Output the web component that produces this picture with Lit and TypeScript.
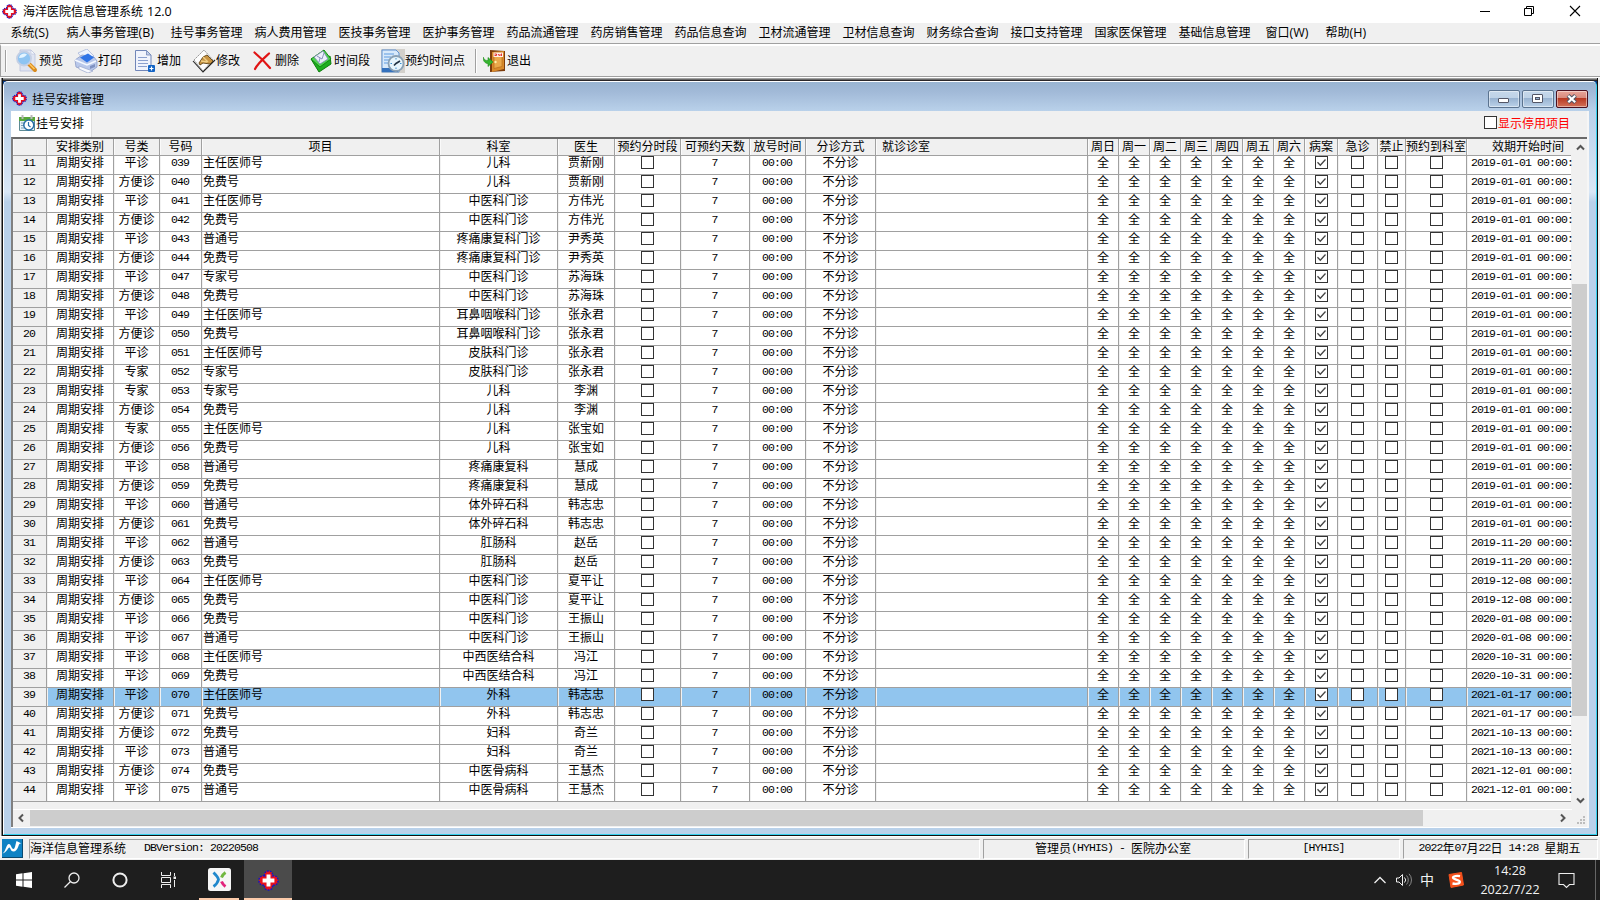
import { LitElement, html, css, svg } from "lit";
import { customElement } from "lit/decorators.js";
import { classMap } from "lit/directives/class-map.js";

const MENUS: [string, string][] = [
  ["系统", "(S)"], ["病人事务管理", "(B)"], ["挂号事务管理", ""], ["病人费用管理", ""], ["医技事务管理", ""],
  ["医护事务管理", ""], ["药品流通管理", ""], ["药房销售管理", ""], ["药品信息查询", ""], ["卫材流通管理", ""],
  ["卫材信息查询", ""], ["财务综合查询", ""], ["接口支持管理", ""], ["国家医保管理", ""], ["基础信息管理", ""],
  ["窗口", "(W)"], ["帮助", "(H)"],
];

const HEADERS = ["", "安排类别", "号类", "号码", "项目", "科室", "医生", "预约分时段", "可预约天数", "放号时间", "分诊方式",
  "就诊诊室", "周日", "周一", "周二", "周三", "周四", "周五", "周六", "病案", "急诊", "禁止", "预约到科室", "效期开始时间"];

const P = "平诊", F = "方便诊", Z = "专家";
const ZR = "主任医师号", MF = "免费号", PT = "普通号", ZJ = "专家号";
// [号类, 号码, 项目, 科室, 医生, 开始日期]
const ROWS: string[][] = [
  [P, "039", ZR, "儿科", "贾新刚", "2019-01-01"],
  [F, "040", MF, "儿科", "贾新刚", "2019-01-01"],
  [P, "041", ZR, "中医科门诊", "方伟光", "2019-01-01"],
  [F, "042", MF, "中医科门诊", "方伟光", "2019-01-01"],
  [P, "043", PT, "疼痛康复科门诊", "尹秀英", "2019-01-01"],
  [F, "044", MF, "疼痛康复科门诊", "尹秀英", "2019-01-01"],
  [P, "047", ZJ, "中医科门诊", "苏海珠", "2019-01-01"],
  [F, "048", MF, "中医科门诊", "苏海珠", "2019-01-01"],
  [P, "049", ZR, "耳鼻咽喉科门诊", "张永君", "2019-01-01"],
  [F, "050", MF, "耳鼻咽喉科门诊", "张永君", "2019-01-01"],
  [P, "051", ZR, "皮肤科门诊", "张永君", "2019-01-01"],
  [Z, "052", ZJ, "皮肤科门诊", "张永君", "2019-01-01"],
  [Z, "053", ZJ, "儿科", "李渊", "2019-01-01"],
  [F, "054", MF, "儿科", "李渊", "2019-01-01"],
  [Z, "055", ZR, "儿科", "张宝如", "2019-01-01"],
  [F, "056", MF, "儿科", "张宝如", "2019-01-01"],
  [P, "058", PT, "疼痛康复科", "慧成", "2019-01-01"],
  [F, "059", MF, "疼痛康复科", "慧成", "2019-01-01"],
  [P, "060", PT, "体外碎石科", "韩志忠", "2019-01-01"],
  [F, "061", MF, "体外碎石科", "韩志忠", "2019-01-01"],
  [P, "062", PT, "肛肠科", "赵岳", "2019-11-20"],
  [F, "063", MF, "肛肠科", "赵岳", "2019-11-20"],
  [P, "064", ZR, "中医科门诊", "夏平让", "2019-12-08"],
  [F, "065", MF, "中医科门诊", "夏平让", "2019-12-08"],
  [P, "066", MF, "中医科门诊", "王振山", "2020-01-08"],
  [P, "067", PT, "中医科门诊", "王振山", "2020-01-08"],
  [P, "068", ZR, "中西医结合科", "冯江", "2020-10-31"],
  [P, "069", MF, "中西医结合科", "冯江", "2020-10-31"],
  [P, "070", ZR, "外科", "韩志忠", "2021-01-17"],
  [F, "071", MF, "外科", "韩志忠", "2021-01-17"],
  [F, "072", MF, "妇科", "奇兰", "2021-10-13"],
  [P, "073", PT, "妇科", "奇兰", "2021-10-13"],
  [F, "074", MF, "中医骨病科", "王慧杰", "2021-12-01"],
  [P, "075", PT, "中医骨病科", "王慧杰", "2021-12-01"],
];

const cross = (size: number) => html`<svg width=${size} height=${size} viewBox="0 0 16 16">
  <path d="M5 4.500C4.600 1.800 6.300.7 8 .7s3.400 1.100 3 3.800C13.900 4.100 15.300 5.800 15.300 8s-1.400 3.900-4.300 3.500c.4 2.700-1.300 3.800-3 3.800s-3.400-1.100-3-3.800C2.100 11.900.7 10.200.7 8S2.100 4.100 5 4.500z" fill="#e8101c"/>
  <path d="M5 4.500C4.600 1.800 6.300.7 8 .7s3.400 1.100 3 3.800C13.900 4.100 15.300 5.800 15.300 8s-1.400 3.900-4.300 3.500c.4 2.700-1.300 3.800-3 3.800s-3.400-1.100-3-3.800C2.100 11.900.7 10.200.7 8S2.100 4.100 5 4.500z" fill="none" stroke="#1414c8" stroke-width="1.100" stroke-dasharray="1.300 .9"/>
  <path d="M6.500 3.500h3v3h3v3h-3v3h-3v-3h-3v-3h3z" fill="#fff"/></svg>`;

const TOOLS: { label: string; icon: unknown }[] = [
  { label: "预览", icon: svg`
    <path d="M5 1h11l4 4v17H5z" fill="#dfe4f2" stroke="#b9c0da" stroke-width=".8"/><path d="M16 1v4h4z" fill="#f7f9fd" stroke="#b9c0da" stroke-width=".6"/>
    <path d="M14 15l6 6" stroke="#d88a1c" stroke-width="4" stroke-linecap="round"/><path d="M14.500 15l5 5" stroke="#ffc860" stroke-width="1.500"/>
    <circle cx="9" cy="9.500" r="7" fill="#8ec4f2" stroke="#c4cfe4" stroke-width="1.800"/><path d="M4 9a5 5 0 0 1 8-3.500c-2 2.500-4 3.500-8 3.500z" fill="#e4f4ff"/>` },
  { label: "打印", icon: svg`
    <path d="M4 4l9-4 7 7-9 5z" fill="#eef3fd" stroke="#aab8da" stroke-width=".8"/><path d="M1 11L8 6l12 2 3 4v6l-7 5-14-5z" fill="#b9c8ea" stroke="#8c9cc8" stroke-width=".8"/>
    <path d="M6 8.500l8-4 6 4-7 5z" fill="#2f74e6"/><path d="M1 11l12 5 9-4" fill="none" stroke="#f4f8ff" stroke-width="1.600"/><path d="M5 17l8 3 6 2-5 2-9-4z" fill="#f8faff" stroke="#98a6cc" stroke-width=".7"/><path d="M16 17l5-2v3l-5 2z" fill="#7f92c2"/>` },
  { label: "增加", icon: svg`
    <path d="M2.500 1.500h11l4.500 4.500v15.500h-15.500z" fill="#f0f3fc" stroke="#7186b8"/><path d="M13.500 1.500v4.500h4.500z" fill="#c3cfe8" stroke="#7186b8" stroke-width=".8"/>
    <path d="M5 8.500h9M5 11.500h10M5 14.500h10M5 17.500h9" stroke="#8ba0ce"/><rect x="15" y="16" width="7" height="7" rx="1" fill="#1263c4"/><path d="M18.500 17.500v4M16.500 19.500h4" stroke="#fff" stroke-width="1.200"/>` },
  { label: "修改", icon: svg`
    <path d="M2 11L12 1l9 10-10 11z" fill="#fdfdfd" stroke="#9a9a9a" stroke-dasharray="2 .6"/><path d="M1 12l10 11 12-12" fill="none" stroke="#222" stroke-width="1.100"/>
    <path d="M7 14l4-6 4-2 6 6-3 3-7-1-3 2z" fill="#c89442" stroke="#5e4316" stroke-width=".9"/><path d="M11 8l5 5M9 12l6 1" stroke="#f0cf86" stroke-width="1.400"/>` },
  { label: "删除", icon: svg`
    <path d="M3.500 3.500C9 8 14 13 19 19M18 4.500C13 9 7 14 4 20" stroke="#e01414" stroke-width="2.200" fill="none" stroke-linecap="round"/>` },
  { label: "时间段", icon: svg`
    <path d="M1 10l8 13 12-8-1-8-11 7z" fill="#1fae1f" stroke="#0c7d0c"/><path d="M1 10L14 1l7 9-11 8z" fill="#4fd24f" stroke="#128a12"/>
    <path d="M4 8l9-6 5 8-8 5z" fill="#eceffa" stroke="#8088b4" stroke-width=".8"/><path d="M7 7l5 3 2-6M9 13l1-4" stroke="#8088b4" fill="none" stroke-width=".9"/>` },
  { label: "预约时间点", icon: svg`
    <rect x="0" y="0" width="24" height="24" fill="#d3d0cb"/><path d="M1 1h14l3 3v19H1z" fill="#d8e9fa" stroke="#5e92d2"/><path d="M3 5h10M3 8h7M3 11h5M3 14h4" stroke="#5e9be0"/><path d="M1 19h16v4H1z" fill="#3471bd"/>
    <circle cx="15" cy="14.500" r="7.500" fill="#e8f5fc" stroke="#8aa0b4" stroke-width="1.800"/><path d="M13 16.500l2-2 4-2.500" stroke="#234" stroke-width="1.600" fill="none"/><path d="M15 9v1.500M15 18.500V20M9.500 14.500h1.500M19 14.500h1.500" stroke="#3a8ed0"/>` },
  { label: "退出", icon: svg`
    <path d="M7 1l15 1v20l-15 1z" fill="#7c3c0c"/><path d="M9 3l12-1v18l-12 3z" fill="#d98a2b"/><path d="M11 6l8-.5v12L11 19.500z" fill="#eba94b" stroke="#b4681a" stroke-width=".6"/><rect x="10.500" y="3.500" width="9.500" height="4.500" fill="#fff0e8"/><path d="M11.500 5h2v1.500h-2M15 5l1.500 2M17 5v2M18.500 4.500v2.500" stroke="#e02020" stroke-width=".9" fill="none"/><circle cx="12.500" cy="13" r="1.200" fill="#fff1a8"/>
    <path d="M0 8c1 3 3 3.500 5 3.500V8.500l5 4.500-5 4.500v-3C2 14.500 0 12 0 8z" fill="#35b52f" stroke="#1d8a1a" stroke-width=".6"/>` },
];

@customElement("his-checkbox")
class HisCheckbox extends LitElement {
  static properties = { checked: { type: Boolean } };
  declare checked: boolean;
  static styles = css`
    :host { display: block; width: 13px; height: 13px; }
    svg { display: block; }
  `;
  render() {
    return html`<svg width="13" height="13"><rect x=".5" y=".5" width="12" height="12" fill="#fff" stroke="#333"/>
      ${this.checked ? svg`<path d="M2.500 6.300l2.800 2.900 5.200-5.700" fill="none" stroke="#444" stroke-width="1.300"/>` : ""}</svg>`;
  }
}

@customElement("his-grid")
class HisGrid extends LitElement {
  static styles = css`
    :host { display: block; width: 1559px; background: #f0f0f0; color: #000; }
    .row {
      display: grid; height: 19px; width: 1559px;
      grid-template-columns: 34px 67px 46px 42px 238px 118px 57px 66px 69px 56px 70px 212px repeat(7, 31px) 33px 40px 28px 61px 104px;
    }
    .head { height: 17px; background: #f0f0f0; }
    .cell {
      box-sizing: border-box; border-right: 1px solid #a0a0a0; border-bottom: 1px solid #a0a0a0;
      display: flex; justify-content: center; align-items: flex-start;
      background: #fff; white-space: nowrap; line-height: 11px; box-shadow: inset 1px 0 #f2f2f2; min-width: 0;
    }
    .head .cell { background: #f0f0f0; line-height: 13px; box-shadow: inset 1px 0 #fafafa; }
    .cell.num { background: #f0f0f0; }
    .selected .cell:not(.num) { background: #91c5ee; }
    .left { justify-content: flex-start; padding-left: 1px; }
    .head .room { justify-content: flex-start; padding-left: 6px; }
    .cell.date { justify-content: flex-start; padding-left: 4px; border-right: 0; }
    .head .cell.date { padding-left: 25px; }
    .cell.mono { font-family: "Liberation Mono", monospace; font-size: 11.500px; letter-spacing: -0.9px; padding-right: 1px; line-height: 14px; }
    .cell.date.mono { padding-right: 0; }
  `;
  render() {
    return html`
      <div class="row head">
        ${HEADERS.map((h, i) => html`<div class=${classMap({ cell: true, room: i === 11, date: i === 23 })}>${h}</div>`)}
      </div>
      ${ROWS.map(([kind, code, item, dept, doctor, date], i) => html`
        <div class=${classMap({ row: true, selected: i === 28 })}>
          <div class="cell num mono">${i + 11}</div>
          <div class="cell">周期安排</div>
          <div class="cell">${kind}</div>
          <div class="cell mono">${code}</div>
          <div class="cell left">${item}</div>
          <div class="cell">${dept}</div>
          <div class="cell">${doctor}</div>
          <div class="cell"><his-checkbox></his-checkbox></div>
          <div class="cell mono">7</div>
          <div class="cell mono">00:00</div>
          <div class="cell">不分诊</div>
          <div class="cell"></div>
          ${[0, 1, 2, 3, 4, 5, 6].map(() => html`<div class="cell">全</div>`)}
          <div class="cell"><his-checkbox checked></his-checkbox></div>
          <div class="cell"><his-checkbox></his-checkbox></div>
          <div class="cell"><his-checkbox></his-checkbox></div>
          <div class="cell"><his-checkbox></his-checkbox></div>
          <div class="cell date mono">${date} 00:00:</div>
        </div>`)}
    `;
  }
}

@customElement("app-root")
class AppRoot extends LitElement {
  static styles = css`
    :host {
      display: flex; flex-direction: column; width: 1600px; height: 900px; overflow: hidden;
      font: 12px "Noto Sans CJK SC", sans-serif; color: #000; background: #f0f0f0; white-space: nowrap;
    }
    * { box-sizing: border-box; }
    svg { display: block; flex: none; }
    .latin { font-family: "Open Sans", sans-serif; }
    .mono { font-family: "Liberation Mono", monospace; font-size: 11.500px; letter-spacing: -0.9px; white-space: pre; }

    .title { height: 23px; background: #fff; display: flex; align-items: center; padding: 0 19px 0 2px; }
    .title .name { margin: -1px 0 0 6px; flex: 1; }
    .title .name .latin { font-size: 12.500px; margin-left: 4px; }
    .sys { display: flex; gap: 33px; margin-top: -2px; }

    .menu { height: 21px; border-bottom: 1px solid #a0a0a0; padding-left: 10.500px; display: grid; line-height: 17px;
      grid-template-columns: 56px 104px repeat(12, 84px) 87px 60px 80px; }
    .menu .latin { font-size: 12.500px; }
    .tools { height: 33px; border-top: 2px solid #fff; border-left: 1px solid #a0a0a0; border-bottom: 1px solid #a0a0a0;
      display: flex; padding: 0 0 1px 4px; align-items: center; }
    .grip { width: 1px; height: 22px; background: #a0a0a0; margin-right: 9px; box-shadow: 1px 0 #fff; }
    .tool { display: flex; align-items: center; width: 59px; height: 24px; }
    .tool .label { margin-top: -2px; }
    .tool.wide { width: 71px; }
    .tool.wider { width: 94px; }
    .sep { width: 1px; height: 24px; background: #a0a0a0; margin-right: 7px; box-shadow: 1px 0 #fff; }

    .mdi { height: 759px; padding: 0 2px 0 2px; border-top: 1px solid #fff; background: #f0f0f0; display: flex; }
    .frame { flex: 1; border: 1px solid #111; border-top: 0; box-shadow: -1px 0 #808080; height: 758px; background: #063a86; overflow: hidden;
      display: flex; flex-direction: column; }
    .edge { height: 3px; background: linear-gradient(#a0a0a0 0 1px, #696969 1px 2px, #2a2628 2px); }
    .win { height: 754px; border: 1px solid #fff; border-right-color: #35d0ee; border-bottom-color: #35d0ee;
      border-radius: 5px 5px 0 0; overflow: hidden; display: flex; flex-direction: column;
      background: linear-gradient(#99b4d1, #b9d1ea 30px, #d9e7f6 110px, #b9d1ea 120px); }
    .wtitle { height: 29px; display: flex; align-items: center; padding: 4px 8px 0 8px; background: linear-gradient(#99b4d1 0%, #a2bad8 35%, #b9d1ea 100%); }
    .wtitle .wname { margin: 0 0 0 5px; flex: 1; }
    .btns { display: flex; gap: 2px; }
    .body { margin: 0 7px 0 7px; height: 717px; border-right: 2px solid #f6f6f6; border-bottom: 1px solid #fff; background: #f0f0f0; }
    .tabs { height: 26px; display: flex; justify-content: space-between; }
    .tab { width: 81px; background: #fff; display: flex; align-items: center; gap: 1px; padding: 0 0 3px 8px; border-right: 1px solid #dcdcdc; }
    .show { display: flex; align-items: center; color: #f00; gap: 1px; padding: 0 17px 3px 0; }
    .area { height: 690px; border-left: 2px solid #808080; border-top: 2px solid #696969; display: grid;
      grid-template-columns: 1559px 1fr; grid-template-rows: 670px 17px; }
    .vbar { display: flex; flex-direction: column; align-items: center; justify-content: space-between; }
    .vtrack { height: 636px; width: 16px; padding-top: 128px; }
    .vthumb { height: 432px; width: 15px; background: #cdcdcd; }
    .hbar { border-top: 1px solid #fff; display: flex; align-items: center; justify-content: space-between; }
    .hthumb { width: 1393px; height: 16px; background: #cdcdcd; }
    .hrest { flex: 1; }
    .hfirst { width: 17px; padding-right: 2px; display: flex; justify-content: center; }
    .corner { display: flex; align-items: flex-end; justify-content: flex-end; padding: 0 3px 2px 0; }

    .status { height: 24px; border-top: 1px solid #fff; display: flex; align-items: center; padding: 0 2px; }
    .panel { height: 20px; border: 1px solid #a0a0a0; border-right-color: #fff; border-bottom-color: #fff; display: flex; align-items: center; justify-content: center; line-height: 14px; padding-bottom: 1px; }
    .p1 { width: 951px; margin: 0 3px 0 6px; justify-content: flex-start; }
    .p2 { width: 262px; margin-right: 3px; padding-right: 2px; }
    .p3 { width: 152px; margin-right: 3px; padding-right: 1px; }
    .p4 { width: 195px; padding-right: 2px; }

    .task { height: 40px; background: #1e1e1e; display: flex; color: #f2f2f2; }
    .slot { width: 48px; display: flex; align-items: center; justify-content: center; }
    .app { border-bottom: 2px solid #fccbaa; width: 40px; margin: 0 5px 0 7px; padding-top: 1px; }
    .active { background: #4b4b4b; border-bottom: 2px solid #fccbaa; padding-top: 2px; }
    .tray { margin-left: auto; display: flex; align-items: center; }
    .lang { font-size: 14px; line-height: 14px; margin: -2px 14px 0 -1px; width: 14px; }
    .sogou { margin-right: 13px; }
    .clock { font-family: "Open Sans", sans-serif; font-size: 12.500px; line-height: 19px; text-align: center; width: 66px; margin-right: 15px; }
    .end { width: 1px; height: 40px; background: #666; margin: 0 4px 0 20px; }
  `;

  private winButton(kind: string) {
    const close = kind === "close";
    const id = "g-" + kind;
    return html`<svg width="32" height="18" viewBox="0 0 32 18">
      <defs><linearGradient id=${id} x1="0" y1="0" x2="0" y2="1">
        <stop offset="0" stop-color=${close ? "#e9a79c" : "#c6d8ea"}/><stop offset=".45" stop-color=${close ? "#d8897c" : "#bed2e7"}/>
        <stop offset=".46" stop-color=${close ? "#b83822" : "#98b3d1"}/><stop offset="1" stop-color=${close ? "#d4745c" : "#bdd3ea"}/>
      </linearGradient></defs>
      <rect x=".5" y=".5" width="31" height="17" rx="1.500" fill=${`url(#${id})`} stroke=${close ? "#4b1020" : "#5b738f"}/>
      <rect x="1.500" y="1.500" width="29" height="15" rx="1" fill="none" stroke="#fff" stroke-opacity=".45"/>
      ${kind === "min" ? svg`<rect x="10.500" y="8.500" width="10" height="4" rx=".5" fill="#fff" stroke="#535666"/>` : ""}
      ${kind === "max" ? svg`<rect x="10.500" y="4.500" width="10" height="8" rx=".5" fill="#fff" stroke="#535666"/><rect x="13.500" y="7.500" width="4" height="2" fill="#98b3d1" stroke="#535666"/>` : ""}
      ${close ? svg`<path d="M12 5.500l7.500 7M19.500 5.500l-7.500 7" stroke="#535666" stroke-width="4.200"/><path d="M12.300 5.800l6.900 6.400M19.200 5.800l-6.900 6.400" stroke="#fff" stroke-width="2.200"/>` : ""}
    </svg>`;
  }

  render() {
    return html`
      <div class="title">
        ${cross(15)}
        <div class="name">海洋医院信息管理系统<span class="latin">12.0</span></div>
        <div class="sys">
          <svg width="12" height="12"><path d="M1 6.500h10" stroke="#000"/></svg>
          <svg width="12" height="12"><path d="M.5 3.500h7v7h-7zM2.500 3.500v-2h7v7h-2" fill="none" stroke="#000"/></svg>
          <svg width="12" height="12"><path d="M1 1l10 10M11 1L1 11" stroke="#000" stroke-width="1.100"/></svg>
        </div>
      </div>
      <div class="menu">${MENUS.map(([t, k]) => html`<div>${t}<span class="latin">${k}</span></div>`)}</div>
      <div class="tools">
        <div class="grip"></div>
        ${TOOLS.map((t, i) => html`
          ${i === 7 ? html`<div class="sep"></div>` : ""}
          <div class=${classMap({ tool: true, wide: i === 5, wider: i === 6 })}>
            <svg width="24" height="24" viewBox="0 0 24 24">${t.icon}</svg><span class="label">${t.label}</span>
          </div>`)}
      </div>
      <div class="mdi">
        <div class="frame">
          <div class="edge"></div>
          <div class="win">
            <div class="wtitle">
              ${cross(15)}<div class="wname">挂号安排管理</div>
              <div class="btns">${this.winButton("min")}${this.winButton("max")}${this.winButton("close")}</div>
            </div>
            <div class="body">
              <div class="tabs">
                <div class="tab">
                  <svg width="16" height="16"><path d="M.5 2.500h15v13H.5z" fill="#e6f2fa" stroke="#5c8a94"/><path d="M0 2h16v4H0z" fill="#57a63a"/><path d="M3.500 0v4M12.500 0v4" stroke="#b8b8b8" stroke-width="2"/><path d="M2 8h3M2 10.500h3M2 13h3" stroke="#7c9cb0"/><circle cx="9.800" cy="10" r="5" fill="#fff" stroke="#2870a8" stroke-width="1.500"/><path d="M9.500 7v3.500l2 1.500" fill="none" stroke="#2870a8" stroke-width="1.200"/></svg>
                  挂号安排
                </div>
                <div class="show"><his-checkbox></his-checkbox>显示停用项目</div>
              </div>
              <div class="area">
                <his-grid></his-grid>
                <div class="vbar">
                  <svg width="15" height="17"><path d="M4 10.500l3.500-3.500 3.500 3.500" fill="none" stroke="#555" stroke-width="2"/></svg>
                  <div class="vtrack"><div class="vthumb"></div></div>
                  <svg width="15" height="17"><path d="M4 6.500l3.500 3.500 3.500-3.500" fill="none" stroke="#555" stroke-width="2"/></svg>
                </div>
                <div class="hbar">
                  <div class="hfirst"><svg width="10" height="10"><path d="M7 1.500L3.500 5 7 8.500" fill="none" stroke="#555" stroke-width="2"/></svg></div>
                  <div class="hthumb"></div><div class="hrest"></div>
                  <div class="hfirst"><svg width="10" height="10"><path d="M3 1.500L6.500 5 3 8.500" fill="none" stroke="#555" stroke-width="2"/></svg></div>
                </div>
                <div class="corner"><svg width="8" height="8"><path d="M6 0h2v2H6zM3 3h2v2H3zM6 3h2v2H6zM0 6h2v2H0zM3 6h2v2H3zM6 6h2v2H6z" fill="#bdbdbd"/></svg></div>
              </div>
            </div>
          </div>
        </div>
      </div>
      <div class="status">
        <svg width="21" height="19"><rect width="21" height="19" fill="#0a4a70"/><rect width="20" height="18" fill="#0e82c4"/><path d="M.5 14.500C4 12.500 4 5 7 5c2 0 2.500 5 4.500 5C13 10 13.500 5 14.500 2l5 2.500c-2 0-2.500.5-3 2.500-1 3.500-3 5.500-5 5.500-3 0-3-4-4-4-1.500 0-3 5-7 6z" fill="#fff"/></svg>
        <div class="panel p1">海洋信息管理系统<span class="mono">   DBVersion: 20220508</span></div>
        <div class="panel p2">管理员<span class="mono">(HYHIS) - </span>医院办公室</div>
        <div class="panel p3"><span class="mono">[HYHIS]</span></div>
        <div class="panel p4"><span class="mono">2022</span>年<span class="mono">07</span>月<span class="mono">22</span>日<span class="mono"> 14:28 </span>星期五</div>
      </div>
      <div class="task">
        <div class="slot"><svg width="16" height="16"><path d="M0 2.200L6.500 1.300V7.500H0zM7.500 1.200L16 0v7.500H7.500zM0 8.500h6.500v6.200L0 13.800zM7.500 8.500H16V16l-8.500-1.200z" fill="#fff"/></svg></div>
        <div class="slot"><svg width="16" height="16"><circle cx="10" cy="6" r="5" fill="none" stroke="#eee" stroke-width="1.300"/><path d="M6.500 9.500L.5 15.500" stroke="#eee" stroke-width="1.300"/></svg></div>
        <div class="slot"><svg width="16" height="16"><circle cx="8" cy="8" r="6.600" fill="none" stroke="#eee" stroke-width="2"/></svg></div>
        <div class="slot"><svg width="17" height="16"><path d="M1.500 0v3.500h9V0M1.500 16v-3.500h9V16M1.500 5.500h9v5h-9zM14.500 1v3M14.500 8v7" fill="none" stroke="#eee"/><rect x="13.500" y="4.500" width="2.500" height="2.500" fill="#eee"/></svg></div>
        <div class="slot app"><svg width="23" height="23"><rect width="23" height="23" rx="2.500" fill="#f6f6f6"/><path d="M5.500 4.500c2.500 2.500 4.500 5 5 7-.5 2-2 5-5 7" fill="none" stroke="#2188cc" stroke-width="2.800"/><path d="M17.500 4.500c-1.800 1.200-3 2.800-4 5" fill="none" stroke="#72b840" stroke-width="3"/><path d="M13.500 13.500c1 2.200 2.200 3.800 4 5" fill="none" stroke="#e2247c" stroke-width="3"/></svg></div>
        <div class="slot active">${cross(21)}</div>
        <div class="tray">
          <svg width="14" height="10"><path d="M1.500 8L7 2.500 12.500 8" fill="none" stroke="#eee" stroke-width="1.300"/></svg>
          <svg width="34" height="16"><path d="M9.500 6h2.500l3.500-3.500v11L12 10H9.500z" fill="none" stroke="#eee"/><path d="M17.500 5.500a3.500 3.500 0 0 1 0 5" fill="none" stroke="#eee"/><path d="M19.500 3.500a6.500 6.500 0 0 1 0 9M22 1.800a9 9 0 0 1 0 12.400" fill="none" stroke="#888"/></svg>
          <span class="lang">中</span>
          <svg class="sogou" width="16" height="16"><path d="M1 2.500L13.500.5 15.500 13 3 15.500z" fill="#f4511c" stroke="#f4511c" stroke-linejoin="round"/><path d="M12 4.200c-3-.6-7-.2-7 1.600S11.800 7.600 11.800 9.800 8 12.200 4.500 11.500" fill="none" stroke="#fff" stroke-width="2.300"/></svg>
          <div class="clock">14:28<br>2022/7/22</div>
          <svg width="17" height="17"><path d="M1 1.500h15v11h-4.500l-3 3-3-3H1z" fill="none" stroke="#eee" stroke-width="1.100"/></svg>
          <div class="end"></div>
        </div>
      </div>
    `;
  }
}
